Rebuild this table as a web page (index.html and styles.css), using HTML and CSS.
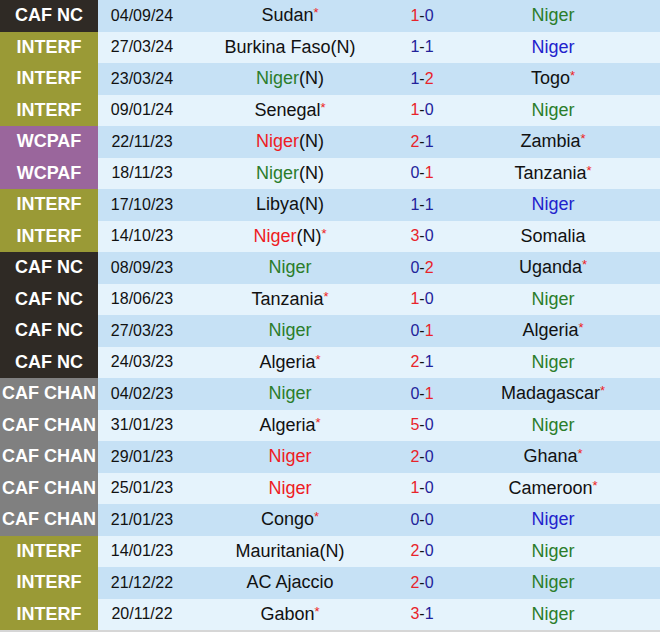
FILE: index.html
```html
<!DOCTYPE html>
<html>
<head>
<meta charset="utf-8">
<link rel="stylesheet" href="styles.css">
</head>
<body>
<div class="table">
  <div class="row dark"><div class="comp nc">CAF NC</div><div class="date">04/09/24</div><div class="home">Sudan<span class="star">*</span></div><div class="score"><span class="r">1</span>-<span class="b">0</span></div><div class="away g">Niger</div><div></div></div>
  <div class="row light"><div class="comp inter">INTERF</div><div class="date">27/03/24</div><div class="home">Burkina Faso(N)</div><div class="score"><span class="b">1</span>-<span class="b">1</span></div><div class="away bl">Niger</div><div></div></div>
  <div class="row dark"><div class="comp inter">INTERF</div><div class="date">23/03/24</div><div class="home"><span class="g">Niger</span>(N)</div><div class="score"><span class="b">1</span>-<span class="r">2</span></div><div class="away">Togo<span class="star">*</span></div><div></div></div>
  <div class="row light"><div class="comp inter">INTERF</div><div class="date">09/01/24</div><div class="home">Senegal<span class="star">*</span></div><div class="score"><span class="r">1</span>-<span class="b">0</span></div><div class="away g">Niger</div><div></div></div>
  <div class="row dark"><div class="comp wc">WCPAF</div><div class="date">22/11/23</div><div class="home"><span class="rd">Niger</span>(N)</div><div class="score"><span class="r">2</span>-<span class="b">1</span></div><div class="away">Zambia<span class="star">*</span></div><div></div></div>
  <div class="row light"><div class="comp wc">WCPAF</div><div class="date">18/11/23</div><div class="home"><span class="g">Niger</span>(N)</div><div class="score"><span class="b">0</span>-<span class="r">1</span></div><div class="away">Tanzania<span class="star">*</span></div><div></div></div>
  <div class="row dark"><div class="comp inter">INTERF</div><div class="date">17/10/23</div><div class="home">Libya(N)</div><div class="score"><span class="b">1</span>-<span class="b">1</span></div><div class="away bl">Niger</div><div></div></div>
  <div class="row light"><div class="comp inter">INTERF</div><div class="date">14/10/23</div><div class="home"><span class="rd">Niger</span>(N)<span class="star">*</span></div><div class="score"><span class="r">3</span>-<span class="b">0</span></div><div class="away">Somalia</div><div></div></div>
  <div class="row dark"><div class="comp nc">CAF NC</div><div class="date">08/09/23</div><div class="home g">Niger</div><div class="score"><span class="b">0</span>-<span class="r">2</span></div><div class="away">Uganda<span class="star">*</span></div><div></div></div>
  <div class="row light"><div class="comp nc">CAF NC</div><div class="date">18/06/23</div><div class="home">Tanzania<span class="star">*</span></div><div class="score"><span class="r">1</span>-<span class="b">0</span></div><div class="away g">Niger</div><div></div></div>
  <div class="row dark"><div class="comp nc">CAF NC</div><div class="date">27/03/23</div><div class="home g">Niger</div><div class="score"><span class="b">0</span>-<span class="r">1</span></div><div class="away">Algeria<span class="star">*</span></div><div></div></div>
  <div class="row light"><div class="comp nc">CAF NC</div><div class="date">24/03/23</div><div class="home">Algeria<span class="star">*</span></div><div class="score"><span class="r">2</span>-<span class="b">1</span></div><div class="away g">Niger</div><div></div></div>
  <div class="row dark"><div class="comp chan">CAF CHAN</div><div class="date">04/02/23</div><div class="home g">Niger</div><div class="score"><span class="b">0</span>-<span class="r">1</span></div><div class="away">Madagascar<span class="star">*</span></div><div></div></div>
  <div class="row light"><div class="comp chan">CAF CHAN</div><div class="date">31/01/23</div><div class="home">Algeria<span class="star">*</span></div><div class="score"><span class="r">5</span>-<span class="b">0</span></div><div class="away g">Niger</div><div></div></div>
  <div class="row dark"><div class="comp chan">CAF CHAN</div><div class="date">29/01/23</div><div class="home rd">Niger</div><div class="score"><span class="r">2</span>-<span class="b">0</span></div><div class="away">Ghana<span class="star">*</span></div><div></div></div>
  <div class="row light"><div class="comp chan">CAF CHAN</div><div class="date">25/01/23</div><div class="home rd">Niger</div><div class="score"><span class="r">1</span>-<span class="b">0</span></div><div class="away">Cameroon<span class="star">*</span></div><div></div></div>
  <div class="row dark"><div class="comp chan">CAF CHAN</div><div class="date">21/01/23</div><div class="home">Congo<span class="star">*</span></div><div class="score"><span class="b">0</span>-<span class="b">0</span></div><div class="away bl">Niger</div><div></div></div>
  <div class="row light"><div class="comp inter">INTERF</div><div class="date">14/01/23</div><div class="home">Mauritania(N)</div><div class="score"><span class="r">2</span>-<span class="b">0</span></div><div class="away g">Niger</div><div></div></div>
  <div class="row dark"><div class="comp inter">INTERF</div><div class="date">21/12/22</div><div class="home">AC Ajaccio</div><div class="score"><span class="r">2</span>-<span class="b">0</span></div><div class="away g">Niger</div><div></div></div>
  <div class="row light"><div class="comp inter">INTERF</div><div class="date">20/11/22</div><div class="home">Gabon<span class="star">*</span></div><div class="score"><span class="r">3</span>-<span class="b">1</span></div><div class="away g">Niger</div><div></div></div>
</div>
</body>
</html>
```
FILE: styles.css
```css
html, body {
  margin: 0;
  padding: 0;
  background: #ffffff;
}
body {
  font-family: "Liberation Sans", Arial, sans-serif;
  color: #111111;
}
.table {
  width: 660px;
  display: flex;
  flex-direction: column;
  border-bottom: 2px solid #d6d6d6;
}
.row {
  display: grid;
  grid-template-columns: 98px 88px 208px 56px 206px 1fr;
  height: 31.5px;
  align-items: center;
  font-size: 18px;
}
.row > div {
  height: 100%;
  display: flex;
  align-items: center;
  justify-content: center;
  white-space: nowrap;
}
.row.dark { background: #c6e1f5; }
.row.light { background: #e5f3fc; }
.comp {
  color: #ffffff;
  font-weight: bold;
  font-size: 18px;
}
.comp.nc { background: #2f2a25; }
.comp.inter { background: #9a9a36; }
.comp.wc { background: #9a669c; }
.comp.chan { background: #808080; }
.date { font-size: 16px; }
.score { font-size: 16px; }
.g { color: #2b7d2b; }
.rd { color: #ee1c24; }
.bl { color: #2222cc; }
.score .r { color: #e8232a; }
.score .b { color: #22229a; }
.star {
  color: #ee2222;
  font-size: 13px;
  align-self: flex-start;
  margin-top: 5px;
}
```
